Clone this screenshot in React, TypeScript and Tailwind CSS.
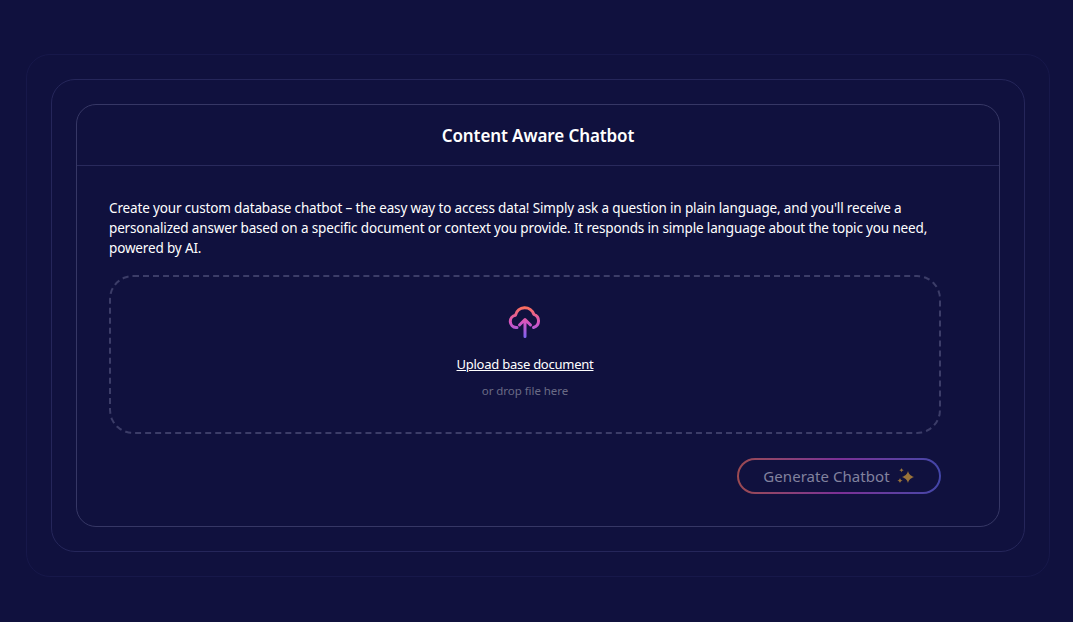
export default function App() {
  return (
    <div className="h-[622px] w-[1073px] overflow-hidden bg-[#10113e] pl-[26px] pr-[23px] pt-[54px] font-['Noto_Sans',sans-serif] text-white">
      <div className="h-[523px] rounded-[24px] border border-[#17184a] p-6">
        <div className="h-[473px] rounded-[24px] border border-[#25265a] p-6">
          <div className="h-[423px] rounded-[20px] border border-[#363765]">
            <div className="flex h-[61px] items-center justify-center border-b border-[#292a5c] pt-[2px]">
              <h1 className="text-[17px] font-semibold leading-6 tracking-[-0.1px]">Content Aware Chatbot</h1>
            </div>
            <div className="pl-8 pr-[58px] pt-[32px]">
              <p className="text-[13.5px] leading-[20px] tracking-[-0.15px]">
                Create your custom database chatbot – the easy way to access data! Simply ask a question in plain
                language, and you'll receive a personalized answer based on a specific document or context you
                provide. It responds in simple language about the topic you need, powered by AI.
              </p>
              <div className="mt-[17px] flex h-[159px] flex-col items-center rounded-[24px] border-2 border-dashed border-[#3c3d68] pt-[28px]">
                <CloudIcon />
                <a className="mt-[13px] text-[13px] leading-5 tracking-[-0.25px] underline">Upload base document</a>
                <span className="mt-[9px] text-[11.5px] leading-4 tracking-[-0.05px] text-[#6a6b85]">or drop file here</span>
              </div>
              <div className="mt-[24px] flex justify-end">
                <div className="h-[36px] w-[204px] rounded-full bg-gradient-to-r from-[#9c4a50] via-[#7c2f96] to-[#4246a8] p-[2px]">
                  <div className="flex h-full items-center justify-center gap-[7px] rounded-full bg-[#10113e] pr-[1px] text-[15px] leading-6 tracking-[0.05px] text-[#82829e]">
                    Generate Chatbot
                    <Sparkles />
                  </div>
                </div>
              </div>
            </div>
          </div>
        </div>
      </div>
    </div>
  )
}

function CloudIcon() {
  return (
    <svg width="36" height="36" viewBox="0 0 36 36" fill="none">
      <defs>
        <linearGradient id="cloud" x1="18" y1="2" x2="18" y2="33" gradientUnits="userSpaceOnUse">
          <stop offset="0" stopColor="#fb6f5c" />
          <stop offset="0.5" stopColor="#d554c0" />
          <stop offset="1" stopColor="#7a63f2" />
        </linearGradient>
      </defs>
      <path
        d="M10 22.500H9a6.200 6.200 0 0 1-.5-12.300A9.500 9.500 0 0 1 26.800 9.300a6.900 6.900 0 0 1-.3 13.200"
        stroke="url(#cloud)"
        strokeWidth="3"
        strokeLinecap="round"
        strokeLinejoin="round"
      />
      <path
        d="M18 31.500V14.500M12.500 20l5.500-5.500 5.500 5.500"
        stroke="url(#cloud)"
        strokeWidth="3"
        strokeLinecap="round"
        strokeLinejoin="round"
      />
    </svg>
  )
}

function Sparkles() {
  return (
    <svg width="17" height="16" viewBox="0 0 17 16" fill="#9a7339">
      <path d="M11 3c.8 2.900 2.100 4.400 6 6-3.900 1.600-5.200 3.100-6 6-.8-2.900-2.100-4.400-6-6 3.900-1.600 5.200-3.100 6-6z" />
      <path d="M4.500 0c.3 1.300.9 1.800 2.200 2.200-1.300.4-1.900.9-2.200 2.200-.3-1.300-.9-1.800-2.200-2.200 1.300-.4 1.900-.9 2.200-2.200z" />
      <path d="M3 10c.4 1.500 1.100 2.200 2.800 2.600-1.700.4-2.400 1.100-2.800 2.600-.4-1.500-1.100-2.200-2.800-2.600 1.700-.4 2.400-1.100 2.800-2.600z" />
    </svg>
  )
}
